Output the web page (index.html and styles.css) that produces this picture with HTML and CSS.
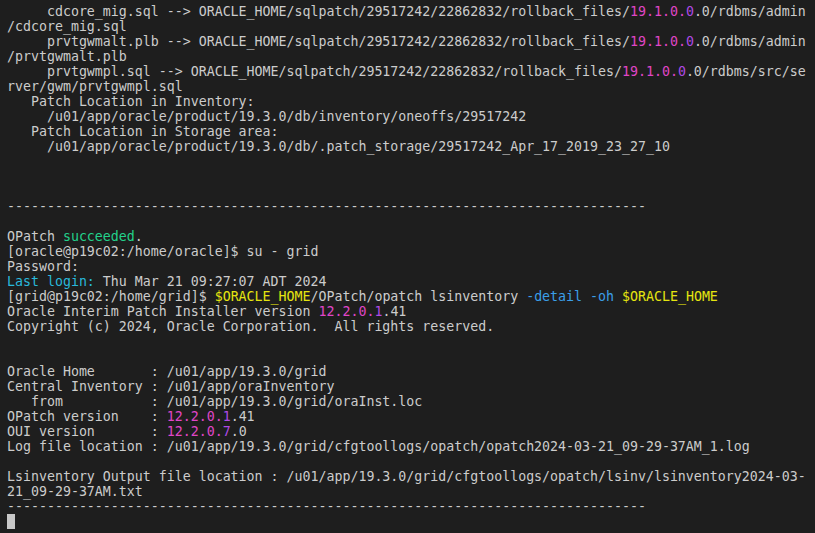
FILE: index.html
```html
<!DOCTYPE html>
<html lang="en">
<head>
    <meta charset="UTF-8">
    <title>Terminal</title>
    <link rel="stylesheet" href="styles.css">
</head>
<body>
<pre class="term">     cdcore_mig.sql --&gt; ORACLE_HOME/sqlpatch/29517242/22862832/rollback_files/<span class="ver">19.1.0.</span><span class="ver-end">0</span>.0/rdbms/admin
/cdcore_mig.sql
     prvtgwmalt.plb --&gt; ORACLE_HOME/sqlpatch/29517242/22862832/rollback_files/<span class="ver">19.1.0.</span><span class="ver-end">0</span>.0/rdbms/admin
/prvtgwmalt.plb
     prvtgwmpl.sql --&gt; ORACLE_HOME/sqlpatch/29517242/22862832/rollback_files/<span class="ver">19.1.0.</span><span class="ver-end">0</span>.0/rdbms/src/se
rver/gwm/prvtgwmpl.sql
   Patch Location in Inventory:
     /u01/app/oracle/product/19.3.0/db/inventory/oneoffs/29517242
   Patch Location in Storage area:
     /u01/app/oracle/product/19.3.0/db/.patch_storage/29517242_Apr_17_2019_23_27_10



--------------------------------------------------------------------------------

OPatch <span class="green">succeeded</span>.
[oracle@p19c02:/home/oracle]$ su - grid
Password:
<span class="cyan">Last login:</span> Thu Mar 21 09:27:07 ADT 2024
[grid@p19c02:/home/grid]$ <span class="yellow">$ORACLE_HOME</span>/OPatch/opatch lsinventory <span class="blue">-detail</span> <span class="blue">-oh</span> <span class="yellow">$ORACLE_HOME</span>
Oracle Interim Patch Installer version <span class="ver">12.2.0.</span><span class="ver-end">1</span>.41
Copyright (c) 2024, Oracle Corporation.  All rights reserved.


Oracle Home       : /u01/app/19.3.0/grid
Central Inventory : /u01/app/oraInventory
   from           : /u01/app/19.3.0/grid/oraInst.loc
OPatch version    : <span class="ver">12.2.0.</span><span class="ver-end">1</span>.41
OUI version       : <span class="ver">12.2.0.</span><span class="ver-end">7</span>.0
Log file location : /u01/app/19.3.0/grid/cfgtoollogs/opatch/opatch2024-03-21_09-29-37AM_1.log

Lsinventory Output file location : /u01/app/19.3.0/grid/cfgtoollogs/opatch/lsinv/lsinventory2024-03-
21_09-29-37AM.txt
--------------------------------------------------------------------------------
<span class="cursor"> </span></pre>
</body>
</html>
```

FILE: styles.css
```css
html, body {
    margin: 0;
    height: 100%;
    background-color: #1e1e1e;
}
.term {
    margin: 0;
    padding: 4px 0 0 7px;
    font-family: "DejaVu Sans Mono", monospace;
    font-size: 13.28px;
    line-height: 15px;
    color: #cccccc;
    white-space: pre;
}
.ver {
    color: #e046c8;
}
.ver-end {
    color: #b04ae6;
}
.green {
    color: #23d18b;
}
.cyan {
    color: #29b8db;
}
.blue {
    color: #3b9ee8;
}
.yellow {
    color: #e5e510;
}
.cursor {
    display: inline-block;
    width: 8px;
    height: 15px;
    vertical-align: top;
    background-color: #c8c8c8;
}
```
